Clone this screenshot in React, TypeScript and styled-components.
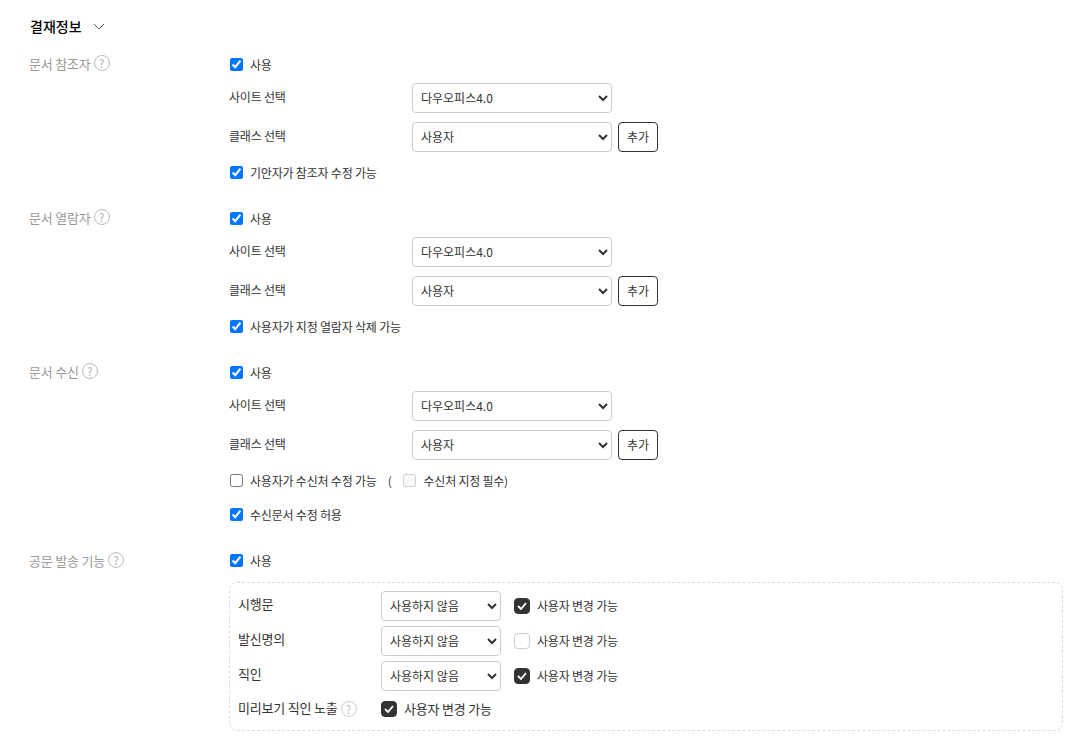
import React from "react";
import styled, { createGlobalStyle } from "styled-components";

const GlobalStyle = createGlobalStyle`
  html, body {
    margin: 0;
    padding: 0;
    background: #fff;
    font-family: "Noto Sans CJK KR", "Inter", sans-serif;
    font-size: 12px;
    letter-spacing: -0.2px;
    color: #333;
  }
`;

const Page = styled.div`
  width: 1070px;
  height: 740px;
  overflow: hidden;
  padding: 15px 7px 0 30px;
  box-sizing: border-box;
`;

const Heading = styled.h2`
  display: flex;
  align-items: center;
  gap: 11px;
  margin: 0 0 18px;
  height: 22px;
  font-size: 14px;
  line-height: 22px;
  font-weight: 500;
  letter-spacing: 0;
  color: #000;
`;

const Section = styled.section<{ $gap?: number }>`
  display: grid;
  grid-template-columns: 200px 1fr;
  margin-bottom: ${(p) => p.$gap ?? 26}px;
`;

const SectionLabel = styled.div<{ $top?: number }>`
  display: flex;
  align-items: center;
  gap: 3px;
  height: 20px;
  margin: ${(p) => p.$top ?? -1}px 0 0 -1px;
  font-size: 13px;
  line-height: 20px;
  color: #999;
`;

const Help = styled.span<{ $soft?: boolean }>`
  display: inline-flex;
  align-items: center;
  justify-content: center;
  box-sizing: border-box;
  width: 16px;
  height: 16px;
  border: 1px solid ${(p) => (p.$soft ? "#ccc" : "#bbb")};
  border-radius: 50%;
  font-size: 11px;
  line-height: 1;
  color: ${(p) => (p.$soft ? "#bbb" : "#aaa")};
  margin-top: ${(p) => (p.$soft ? 3 : -2)}px;
`;

const Body = styled.div`
  display: flex;
  flex-direction: column;
`;

const CheckRow = styled.label<{ $mt?: number; $mb?: number }>`
  display: flex;
  align-items: center;
  height: 20px;
  margin-top: ${(p) => p.$mt ?? 0}px;
  margin-bottom: ${(p) => p.$mb ?? 0}px;
  font-size: 12px;
  line-height: 20px;
  color: #333;
`;

const Check = styled.input.attrs({ type: "checkbox" })`
  width: 13px;
  height: 13px;
  margin: -2px 7px 0 0;
  flex: none;
`;

const Paren = styled.span`
  margin: 0 11px;
`;

const TrailingNote = styled.span`
  margin-left: 1px;
  letter-spacing: -0.25px;
`;

const FieldRow = styled.div`
  display: flex;
  align-items: center;
  height: 30px;
  margin-bottom: 9px;
`;

const FieldLabel = styled.span`
  width: 183px;
  flex: none;
  margin: -4px 0 0 -1px;
  color: #333;
`;

const Select = styled.select<{ $w?: number }>`
  width: ${(p) => p.$w ?? 200}px;
  height: 30px;
  box-sizing: border-box;
  padding: 0 4px 2px;
  border: 1px solid #ccc;
  border-radius: 4px;
  background: #fff;
  font-family: inherit;
  font-size: 12px;
  color: #333;
`;

const AddButton = styled.button`
  width: 40px;
  height: 30px;
  margin-left: 6px;
  padding: 0 0 2px;
  border: 1px solid #333;
  border-radius: 4px;
  background: #fff;
  font-family: inherit;
  font-size: 12px;
  color: #333;
`;

const DashedBox = styled.div`
  margin: 11px 0 0 -1px;
  height: 149px;
  box-sizing: border-box;
  padding: 8px 9px 8px 8px;
  border: 1px dashed #ddd;
  border-radius: 8px;
`;

const BoxRow = styled.div<{ $h?: number }>`
  display: flex;
  align-items: center;
  height: ${(p) => p.$h ?? 30}px;
  margin-bottom: 5px;
`;

const BoxLabel = styled.span<{ $top?: number }>`
  display: flex;
  align-items: center;
  gap: 3px;
  width: 143px;
  flex: none;
  margin-top: ${(p) => p.$top ?? -5}px;
  font-size: 13px;
  color: #333;
`;

const Toggle = styled.span<{ $on: boolean }>`
  display: inline-flex;
  align-items: center;
  justify-content: center;
  box-sizing: border-box;
  width: 16px;
  height: 16px;
  flex: none;
  border-radius: 4px;
  border: 1px solid ${(p) => (p.$on ? "#333" : "#ccc")};
  background: ${(p) => (p.$on ? "#333" : "#fff")};
`;

const ToggleLabel = styled.label<{ $ml?: number; $large?: boolean }>`
  display: flex;
  align-items: center;
  gap: 7px;
  margin-left: ${(p) => p.$ml ?? 0}px;
  font-size: ${(p) => (p.$large ? 13 : 12)}px;
  color: #333;
`;

const ToggleText = styled.span`
  margin-top: -2px;
`;

const Chevron = () => (
  <svg width="12" height="7" viewBox="0 0 12 7" fill="none">
    <path d="M1 1l5 5 5-5" stroke="#555" strokeWidth="1" />
  </svg>
);

const CheckMark = () => (
  <svg width="10" height="8" viewBox="0 0 10 8" fill="none">
    <path d="M1 4l3 3 5-6" stroke="#fff" strokeWidth="1.8" />
  </svg>
);

const UserToggle = ({ on, ml, large }: { on: boolean; ml?: number; large?: boolean }) => (
  <ToggleLabel $ml={ml} $large={large}>
    <Toggle $on={on}>{on && <CheckMark />}</Toggle>
    <ToggleText>사용자 변경 가능</ToggleText>
  </ToggleLabel>
);

const SiteFields = () => (
  <>
    <FieldRow>
      <FieldLabel>사이트 선택</FieldLabel>
      <Select defaultValue="다우오피스4.0">
        <option>다우오피스4.0</option>
      </Select>
    </FieldRow>
    <FieldRow>
      <FieldLabel>클래스 선택</FieldLabel>
      <Select defaultValue="사용자">
        <option>사용자</option>
      </Select>
      <AddButton>추가</AddButton>
    </FieldRow>
  </>
);

const NotUsedSelect = () => (
  <Select $w={120}>
    <option>사용하지 않음</option>
  </Select>
);

export default function App() {
  return (
    <Page>
      <GlobalStyle />
      <Heading>
        결재정보 <Chevron />
      </Heading>

      <Section>
        <SectionLabel>
          문서 참조자 <Help>?</Help>
        </SectionLabel>
        <Body>
          <CheckRow $mb={8}>
            <Check defaultChecked />
            사용
          </CheckRow>
          <SiteFields />
          <CheckRow $mt={2}>
            <Check defaultChecked />
            기안자가 참조자 수정 가능
          </CheckRow>
        </Body>
      </Section>

      <Section>
        <SectionLabel>
          문서 열람자 <Help>?</Help>
        </SectionLabel>
        <Body>
          <CheckRow $mb={8}>
            <Check defaultChecked />
            사용
          </CheckRow>
          <SiteFields />
          <CheckRow $mt={2}>
            <Check defaultChecked />
            사용자가 지정 열람자 삭제 가능
          </CheckRow>
        </Body>
      </Section>

      <Section>
        <SectionLabel>
          문서 수신 <Help>?</Help>
        </SectionLabel>
        <Body>
          <CheckRow $mb={8}>
            <Check defaultChecked />
            사용
          </CheckRow>
          <SiteFields />
          <CheckRow $mt={2} $mb={14}>
            <Check />
            사용자가 수신처 수정 가능
            <Paren>(</Paren>
            <Check disabled />
            <TrailingNote>수신처 지정 필수)</TrailingNote>
          </CheckRow>
          <CheckRow>
            <Check defaultChecked />
            수신문서 수정 허용
          </CheckRow>
        </Body>
      </Section>

      <Section $gap={0}>
        <SectionLabel $top={0}>
          공문 발송 기능 <Help>?</Help>
        </SectionLabel>
        <Body>
          <CheckRow>
            <Check defaultChecked />
            사용
          </CheckRow>
          <DashedBox>
            <BoxRow>
              <BoxLabel>시행문</BoxLabel>
              <NotUsedSelect />
              <UserToggle on ml={13} />
            </BoxRow>
            <BoxRow>
              <BoxLabel>발신명의</BoxLabel>
              <NotUsedSelect />
              <UserToggle on={false} ml={13} />
            </BoxRow>
            <BoxRow>
              <BoxLabel>직인</BoxLabel>
              <NotUsedSelect />
              <UserToggle on ml={13} />
            </BoxRow>
            <BoxRow $h={26}>
              <BoxLabel $top={-3}>
                미리보기 직인 노출 <Help $soft>?</Help>
              </BoxLabel>
              <UserToggle on large />
            </BoxRow>
          </DashedBox>
        </Body>
      </Section>
    </Page>
  );
}
